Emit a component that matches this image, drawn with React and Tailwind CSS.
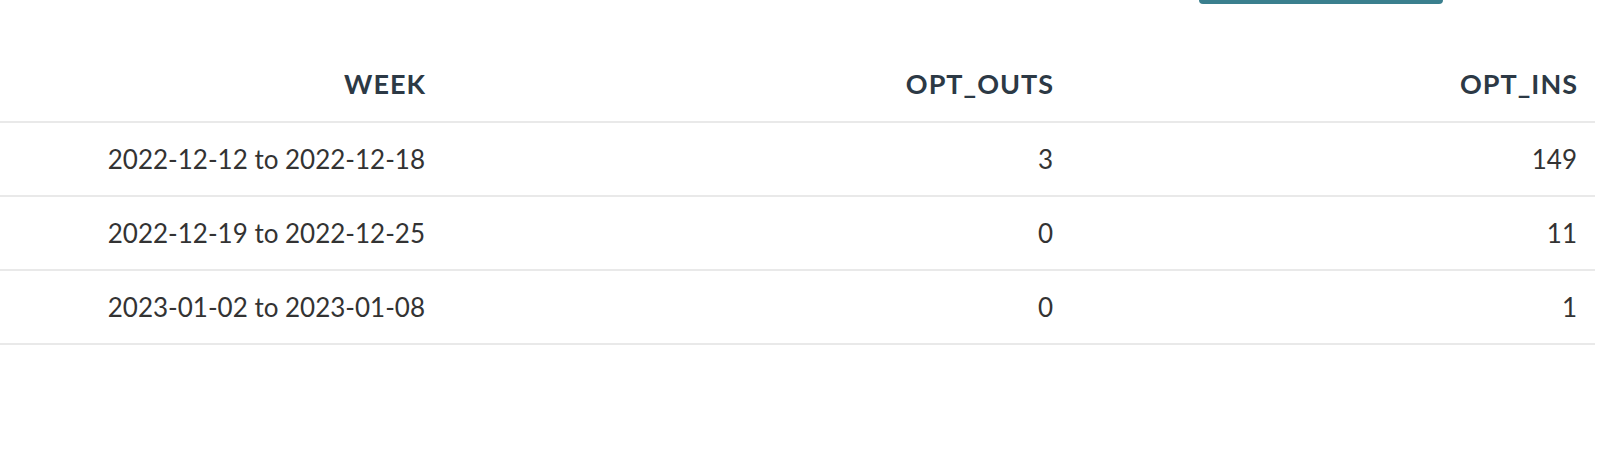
import React from 'react';

const rows = [
  { week: '2022-12-12 to 2022-12-18', outs: 3, ins: 149 },
  { week: '2022-12-19 to 2022-12-25', outs: 0, ins: 11 },
  { week: '2023-01-02 to 2023-01-08', outs: 0, ins: 1 },
];

export default function App() {
  return (
    <div className="w-[1624px] h-[460px] bg-white overflow-hidden" style={{ fontFamily: 'Lato, "Liberation Sans", sans-serif' }}>
      {/* bottom edge of the toolbar button, cut off by the viewport */}
      <div className="flex justify-end pr-[181px]">
        <div className="w-[244px] h-[4px] bg-[#3a7f8e] rounded-b-[4px]" />
      </div>

      <table className="mt-[44px] w-[1595px] border-collapse table-fixed">
        <colgroup>
          <col className="w-[444px]" />
          <col className="w-[628px]" />
          <col className="w-[523px]" />
        </colgroup>
        <thead>
          <tr className="h-[74px] border-b-2 border-[#e9e9e9] text-[#2c3945] text-[27px] tracking-[1px] font-bold">
            <th className="text-right pr-[18px] font-bold">WEEK</th>
            <th className="text-right pr-[18px] font-bold">OPT_OUTS</th>
            <th className="text-right pr-[17px] font-bold">OPT_INS</th>
          </tr>
        </thead>
        <tbody>
          {rows.map((r) => (
            <tr key={r.week} className="h-[74px] border-b-2 border-[#e9e9e9] text-[#333] text-[26px]">
              <td className="text-right pr-[19px]">{r.week}</td>
              <td className="text-right pr-[19px]">{r.outs}</td>
              <td className="text-right pr-[18px]">{r.ins}</td>
            </tr>
          ))}
        </tbody>
      </table>
    </div>
  );
}
